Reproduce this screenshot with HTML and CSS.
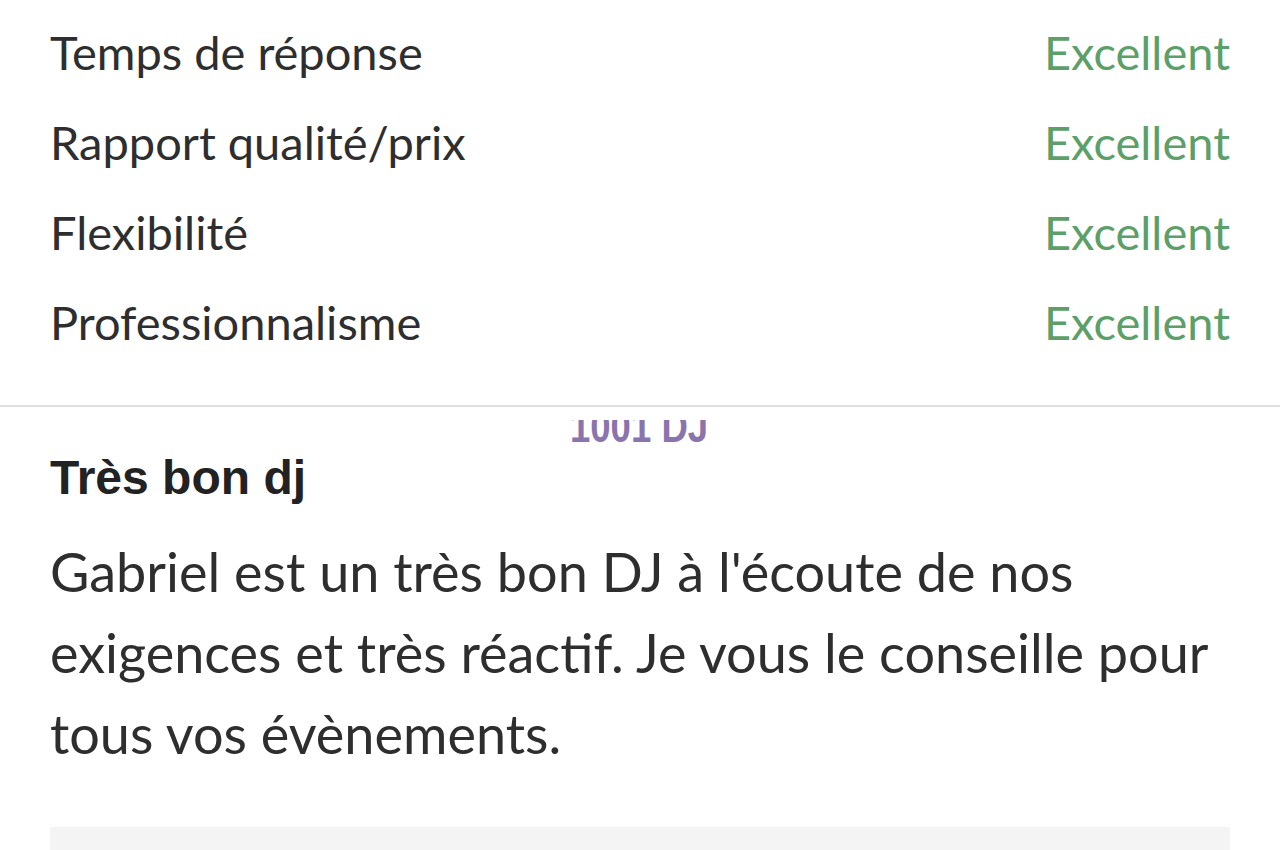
FILE: index.html
```html
<!DOCTYPE html>
<html lang="fr">
<head>
    <meta charset="UTF-8">
    <meta name="viewport" content="width=device-width, initial-scale=1.0">
    <title>Avis</title>
    <link rel="stylesheet" href="styles.css">
</head>
<body>
    <div class="ratings">
        <div class="ratingRow"><span>Temps de réponse</span><span class="score">Excellent</span></div>
        <div class="ratingRow"><span>Rapport qualité/prix</span><span class="score">Excellent</span></div>
        <div class="ratingRow"><span>Flexibilité</span><span class="score">Excellent</span></div>
        <div class="ratingRow"><span>Professionnalisme</span><span class="score">Excellent</span></div>
    </div>
    <div class="review">
        <div class="watermark"><span>1001 DJ</span></div>
        <h2 class="reviewTitle">Très bon dj</h2>
        <p class="reviewText">Gabriel est un très bon DJ à l'écoute de nos exigences et très réactif. Je vous le conseille pour tous vos évènements.</p>
        <div class="replyBox"></div>
    </div>
</body>
</html>
```

FILE: styles.css
```css
body {
    margin: 0;
    background: #fff;
    font-family: 'Lato', sans-serif;
    color: #2e2e2e;
    overflow: hidden;
}

.ratings {
    padding: 7px 50px 38px 50px;
    border-bottom: 2px solid #dedede;
}

.ratingRow {
    display: flex;
    justify-content: space-between;
    line-height: 90px;
    font-size: 47px;
}

.score {
    color: #5d9f69;
}

.review {
    position: relative;
    padding: 0 50px;
}

/* faded logo behind the review, only its lower half shows */
.watermark {
    position: absolute;
    left: 570px;
    top: 13px;
    height: 25px;
    overflow: hidden;
}

.watermark span {
    display: block;
    margin-top: -15px;
    font-family: 'Liberation Sans', sans-serif;
    font-weight: bold;
    font-size: 44px;
    line-height: 44px;
    color: #8a74ad;
    transform: scaleX(0.83);
    transform-origin: left;
}

.reviewTitle {
    margin: 0;
    padding-top: 43px;
    font-family: 'Liberation Sans', sans-serif;
    font-weight: bold;
    font-size: 48px;
    line-height: 56px;
    color: #222;
}

.reviewText {
    margin: 25px 0 0 0;
    font-size: 54px;
    line-height: 81px;
}

.replyBox {
    margin-top: 53px;
    height: 60px;
    background: #f4f4f4;
}
```
